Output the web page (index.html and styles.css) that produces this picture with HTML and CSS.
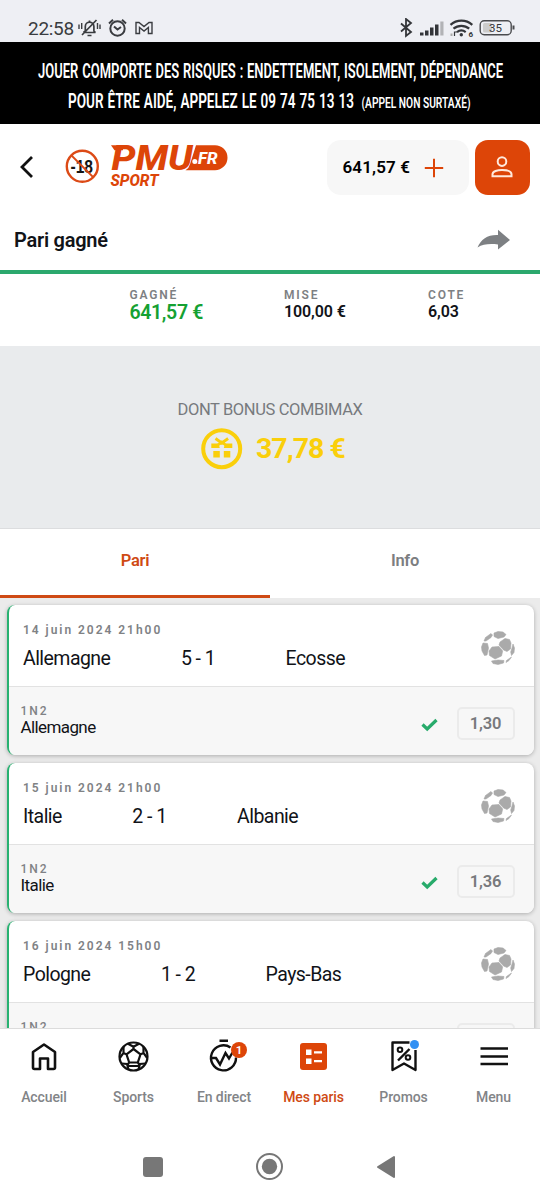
FILE: index.html
```html
<!DOCTYPE html>
<html lang="fr">
<head>
<meta charset="utf-8">
<title>Mes paris</title>
<link rel="stylesheet" href="styles.css">
</head>
<body>
<svg class="defs" width="0" height="0" aria-hidden="true">
  <symbol id="ball" viewBox="0 0 34 34">
    <g fill="#aaa" stroke="#aaa" stroke-width=".6" stroke-linejoin="round">
      <path d="M13 2 17 .5 22 1 25 3.500 23 6 17 7.500 13 5.500Z"/>
      <path d="M10 2.500 11.500 4 10 6.500 5 10 3 10 4.500 6.500Z"/>
      <path d="M24 7.500 28.500 8.500 30 12 29.500 18 26 20.500 22.500 19 18 14 19 11Z"/>
      <path d="M2 12 6.500 12.500 7.500 17 6 24 3.500 24.500 1 20 .5 16Z"/>
      <path d="M11 16 18 15.500 21.700 20 20.500 25 14 28 8.500 24.500 8 20Z"/>
      <path d="M32 13 33.500 17 33 21.500 30.500 24.500 29.700 21 31 17Z"/>
      <path d="M10.500 30 17 29 23 29.500 22.500 32 17 33.500 12 32.500Z"/>
      <path d="M30.500 26 28 29.500 25 31.500 25.500 29.500Z"/>
    </g>
  </symbol>
  <symbol id="check" viewBox="0 0 17 14"><path d="M1.500 6.500 6.200 11 15.500 2" fill="none" stroke="#28ab6b" stroke-width="3.200"/></symbol>
</svg>
<div class="screen">
  <div class="status">
    <span class="clock">22:58</span>
    <svg class="notif" width="76" height="20" viewBox="0 0 76 20" fill="none" stroke="#3a3c40" stroke-width="1.700">
      <path d="M5.500 14.500H17.500M7.300 13V8.500a4.300 4.300 0 0 1 8.600 0V13l1.600 1.500M7.300 13l-1.800 1.500M11.500 2.500v2M4 17 18.500 2M9.500 17.500h4" />
      <path d="M1 6.500v4.500M3.700 5v6M19.500 5v6M22 6.500v4.500" stroke-width="1.400"/>
      <circle cx="39.500" cy="10.500" r="7.200" stroke-width="2"/><path d="M36 8.500 39.500 11.500 43 9M31 5.500 35 1.800M48 5.500 44 1.800" stroke-width="2"/>
      <path d="M58 15.500V4.500h3l5 4 5-4h3v11h-3.600V9.500L66 13l-4.500-3.500v6Z" stroke-width="1.400"/>
    </svg>
    <svg class="signals" width="116" height="20" viewBox="0 0 116 20">
      <path d="M1 5.500 11 14 6 18V1l5 4L1 13.500" fill="none" stroke="#333539" stroke-width="1.800"/>
      <path d="M20 14.500h3.500v3H20ZM25 12.500h3.500v5H25ZM30 9.500h3.500v8H30ZM35 6.500h3.500v11H35Z" fill="#333539"/><path d="M40.300 3.500h3.200v14h-3.200Z" fill="#b2b3b6"/>
      <g fill="none" stroke="#333539" stroke-width="2.200"><path d="M50.500 6.800a16.500 16.500 0 0 1 21.800 0M53.500 10.700a12 12 0 0 1 15.700 0M57 14.200a7 7 0 0 1 8.700 0"/></g>
      <circle cx="61.300" cy="16.800" r="1.700" fill="#333539"/><path d="M51.500 15.500v2.500" stroke="#aaa" stroke-width="2"/><path d="M54.500 13.500V18M55 14h2" stroke="#333539" stroke-width="1.200"/>
      <text x="68.500" y="18.500" class="wifi-gen">6</text>
      <rect x="80.200" y="2.700" width="31" height="14" rx="4" fill="none" stroke="#4a4b4e" stroke-width="1.400"/>
      <rect x="83" y="5" width="9" height="9.500" rx="1.500" fill="#ccc"/><path d="M113.500 7.500v4" stroke="#4a4b4e" stroke-width="2"/>
      <text x="89" y="14" class="battery">35</text>
    </svg>
  </div>
  <div class="warning">
    <svg width="540" height="82" viewBox="0 0 540 82">
      <text x="38" y="35.700" class="w-main" textLength="465" lengthAdjust="spacingAndGlyphs">JOUER COMPORTE DES RISQUES : ENDETTEMENT, ISOLEMENT, DÉPENDANCE</text>
      <text x="68" y="66.200" class="w-main" textLength="286" lengthAdjust="spacingAndGlyphs">POUR ÊTRE AIDÉ, APPELEZ LE 09 74 75 13 13</text>
      <text x="361.500" y="66.200" class="w-small" textLength="109" lengthAdjust="spacingAndGlyphs">(APPEL NON SURTAXÉ)</text>
    </svg>
  </div>
  <header class="header">
    <svg class="back" width="16" height="24" viewBox="0 0 16 24"><path d="M13 2 3 12l10 10" fill="none" stroke="#111" stroke-width="2.800"/></svg>
    <svg class="logo" width="166" height="46" viewBox="0 0 166 46">
      <text x="5.500" y="28.800" class="age" textLength="22.500" lengthAdjust="spacingAndGlyphs">-18</text>
      <circle cx="17.300" cy="22.300" r="15.500" fill="none" stroke="#dc4a16" stroke-width="2.400"/>
      <path d="M6.500 11.500 28 33" stroke="#dc4a16" stroke-width="1.800"/>
      <path d="M131 1.200h19a12.500 12.500 0 0 1 0 25h-29.500q3.500-2 4.500-6Z" fill="#dd4508"/>
      <text x="46.500" y="26" class="pmu" textLength="81" lengthAdjust="spacingAndGlyphs">PMU</text>
      <path d="M46 1.300h12v4.900h-8.500Z" fill="#dd4508"/>
      <circle cx="129.800" cy="17.600" r="2.500" fill="#fff"/>
      <text x="133" y="19.500" class="fr" textLength="19.500" lengthAdjust="spacingAndGlyphs">FR</text>
      <text x="45.500" y="42" class="sport" textLength="48" lengthAdjust="spacingAndGlyphs">SPORT</text>
    </svg>
    <div class="balance"><span>641,57 €</span>
      <svg width="20" height="20" viewBox="0 0 20 20"><path d="M10 .8v18.400M.8 10h18.400" stroke="#dd4508" stroke-width="2"/></svg>
    </div>
    <div class="account">
      <svg width="22" height="22" viewBox="0 0 22 22" fill="none" stroke="#ffe9dc" stroke-width="2"><circle cx="11" cy="5.600" r="4.300"/><path d="M1.500 20.300v-2c0-3 5-4.300 9.500-4.300s9.500 1.300 9.500 4.300v2Z"/></svg>
    </div>
  </header>
  <div class="title"><h1>Pari gagné</h1>
    <svg width="34" height="22" viewBox="0 0 34 22"><path d="M.5 18.500C4 10 11 5.500 21 6V.8L33 11 21 20.500v-5C13 14.500 6 15 .5 18.500Z" fill="#7d8083"/></svg>
  </div>
  <section class="summary">
    <div class="won"><b>GAGNÉ</b><strong>641,57 €</strong></div>
    <div class="stake"><b>MISE</b><strong>100,00 €</strong></div>
    <div class="odds-total"><b>COTE</b><strong>6,03</strong></div>
  </section>
  <section class="bonus">
    <div class="bonus-label">DONT BONUS COMBIMAX</div>
    <div class="bonus-value">
      <svg width="42" height="42" viewBox="0 0 42 42"><circle cx="20.700" cy="20.700" r="18.500" fill="none" stroke="#facf0b" stroke-width="4"/>
        <path d="M10.300 15.500h7.200L18.800 20h-8.500ZM31.300 15.500h-7.200L22.800 20h8.500ZM12.300 23h6.500v6.500h-6.500ZM22.800 23h6.500v6.500h-6.500ZM18 13.500h5.500v3H18Z" fill="#facf0b"/><path d="M14.500 10.500 20.800 15l6.300-4.500M17 17l3.800-3 3.800 3" fill="none" stroke="#facf0b" stroke-width="2.800"/></svg>
      <span>37,78 €</span>
    </div>
  </section>
  <nav class="tabs"><div class="tab active">Pari</div><div class="tab">Info</div></nav>
  <main class="bets">
    <article class="card">
      <div class="match"><div><div class="date">14 juin 2024 21h00</div><div class="teams"><span>Allemagne</span><span>5 - 1</span><span>Ecosse</span></div></div><svg class="ball"><use href="#ball"/></svg></div>
      <div class="pick"><div class="choice"><div class="market">1N2</div><div>Allemagne</div></div><svg class="check"><use href="#check"/></svg><div class="odd">1,30</div></div>
    </article>
    <article class="card">
      <div class="match"><div><div class="date">15 juin 2024 21h00</div><div class="teams"><span>Italie</span><span>2 - 1</span><span>Albanie</span></div></div><svg class="ball"><use href="#ball"/></svg></div>
      <div class="pick"><div class="choice"><div class="market">1N2</div><div>Italie</div></div><svg class="check"><use href="#check"/></svg><div class="odd">1,36</div></div>
    </article>
    <article class="card">
      <div class="match"><div><div class="date">16 juin 2024 15h00</div><div class="teams"><span>Pologne</span><span>1 - 2</span><span>Pays-Bas</span></div></div><svg class="ball"><use href="#ball"/></svg></div>
      <div class="pick"><div class="choice"><div class="market">1N2</div></div><div class="odd"></div></div>
    </article>
  </main>
  <nav class="bottom">
    <div class="item"><svg width="36" height="36" viewBox="0 0 36 36" fill="none" stroke="#111" stroke-width="2.600"><path d="M7 14 18 6.500 29 14v15.500q0 1.500-1.500 1.500H22V20.500h-8V31H8.500Q7 31 7 29.500Z" stroke-linejoin="round"/></svg><span>Accueil</span></div>
    <div class="item"><svg width="36" height="36" viewBox="0 0 36 36" fill="none" stroke="#111" stroke-width="2.200"><circle cx="17.500" cy="18.500" r="14"/><path d="m17.500 11 7 5.300-2.700 8.200h-8.600l-2.700-8.200ZM17.500 11V8.500M24.500 16.300l3.500-1.300M21.800 24.500l1.500 2M13.200 24.500l-1.500 2M10.500 16.300 7 15M12 5.800l5.500 3 5.500-3M27.500 9v6l3.700 5M29.500 25.500l-5.500.5-1.500 5.500M12.500 31.500 11 26l-5.500-.5M3.800 20 7.500 15V9M12 28h11"/></svg><span>Sports</span></div>
    <div class="item"><svg width="36" height="36" viewBox="0 0 36 36" fill="none" stroke="#111" stroke-width="2.400"><path d="M24.500 9.500A12.500 12.500 0 1 0 30 19.500M13.500 2.700h8.500" /><path d="M5 20h5l4 6.500L19.500 15l3.500 5.500 3.500-6"/></svg><i class="badge">1</i><span>En direct</span></div>
    <div class="item current"><svg width="36" height="36" viewBox="0 0 36 36"><rect x="4" y="5" width="27" height="27" rx="3" fill="#dd4508"/><path d="M10 11.500h5.500V17H10ZM10 20.500h5.500V26H10ZM18 13.200h8v2.300h-8ZM18 22h8v2.300h-8Z" fill="#fff"/></svg><span>Mes paris</span></div>
    <div class="item"><svg width="36" height="36" viewBox="0 0 36 36" fill="none" stroke="#111" stroke-width="2.400" stroke-linejoin="round"><path d="M23.500 4.500H6.500V32L18 25.500 29.500 32V12M23.500 11 12 22.500"/><circle cx="14" cy="11.800" r="2.300" stroke-width="2"/><circle cx="22" cy="19.500" r="2.300" stroke-width="2"/></svg><i class="dot"></i><span>Promos</span></div>
    <div class="item"><svg width="36" height="36" viewBox="0 0 36 36"><path d="M4.500 10.500h27.500M4.500 18.500h27.500M4.500 26h27.500" stroke="#111" stroke-width="2.400"/></svg><span>Menu</span></div>
  </nav>
  <div class="system">
    <svg width="20" height="20"><rect width="20" height="20" rx="3" fill="#777"/></svg>
    <svg width="28" height="28"><circle cx="13.500" cy="13.500" r="12.500" fill="none" stroke="#777" stroke-width="2"/><circle cx="13.500" cy="13.500" r="7.700" fill="#777"/></svg>
    <svg width="20" height="24"><path d="M2 12 18 2v20Z" fill="#777" stroke="#777" stroke-width="2" stroke-linejoin="round"/></svg>
  </div>
</div>
</body>
</html>
```
FILE: styles.css
```css
* { box-sizing: border-box; }
body { margin: 0; font-family: Roboto, sans-serif; color: #111318; background: #fff; }
svg { display: block; flex: none; }
.defs { position: absolute; }
.screen { width: 540px; height: 1200px; overflow: hidden; display: flex; flex-direction: column; }
.screen > * { flex: none; }

.status { height: 42px; background: #eeeff4; display: flex; padding: 17px 24px 0 28px; }
.clock { font-size: 19px; line-height: 23px; width: 50px; letter-spacing: -.3px; color: #3a3c40; }
.notif { margin-top: 1px; }
.signals { margin: 1px 0 0 auto; transform: translateX(-6px); margin-right: -6px; }
.wifi-gen { font-size: 8px; font-weight: 700; fill: #333539; }
.battery { font-size: 11.5px; fill: #333539; }

.warning { height: 82px; background: #000; }
.w-main { font-size: 21px; font-weight: 600; fill: #fff; word-spacing: 1px; }
.w-small { font-size: 15px; font-weight: 600; fill: #fff; }

.header { height: 86px; display: flex; align-items: center; padding: 0 10.5px 0 19px; }
.logo { margin-left: 30px; }
.age { font-family: "Liberation Sans", sans-serif; font-size: 18px; font-weight: 700; fill: #151515; }
.pmu { font-size: 34.5px; font-weight: 800; font-style: italic; fill: #dd4508; }
.fr { font-size: 17px; font-weight: 800; font-style: italic; fill: #fff; }
.sport { font-size: 16px; font-weight: 800; font-style: italic; fill: #dd4508; }
.balance { margin-left: auto; width: 142px; height: 55px; border-radius: 14px; background: #f7f7f7; display: flex; align-items: center; padding-left: 16px; gap: 13.5px; font-size: 17px; font-weight: 600; letter-spacing: .15px; white-space: nowrap; color: #000; }
.balance svg { margin-top: 1px; }
.account { margin-left: 6px; width: 55px; height: 55px; border-radius: 13px; background: #dd4508; display: flex; align-items: center; justify-content: center; }

.title { height: 60px; display: flex; align-items: center; justify-content: space-between; padding: 0 29px 0 14px; }
.title h1 { margin: 0; font-size: 20px; font-weight: 600; letter-spacing: -.25px; }

.summary { height: 76px; border-top: 4px solid #2ba86d; display: grid; grid-template-columns: 154.5px 144px 1fr; padding: 14px 0 0 129.5px; }
.summary b { display: block; font-size: 12px; line-height: 14px; font-weight: 600; letter-spacing: 1.8px; color: #7d8083; }
.summary strong { display: block; font-size: 16px; line-height: 19px; font-weight: 600; letter-spacing: -.1px; }
.summary .won strong { font-size: 19.5px; line-height: 21px; letter-spacing: -.35px; color: #15a132; }

.bonus { height: 183px; background: #e9ebed; border-bottom: 1px solid #dcdddf; padding-top: 54px; }
.bonus-label { text-align: center; font-size: 16.5px; line-height: 20px; color: #777a7e; letter-spacing: -.38px; }
.bonus-value { display: flex; align-items: center; padding-left: 201px; gap: 13px; margin-top: 7.5px; color: #facf0b; font-size: 28.5px; line-height: 42px; font-weight: 700; letter-spacing: -1px; }

.tabs { height: 69px; display: flex; }
.tab { flex: 1; text-align: center; font-size: 16.5px; line-height: 64px; font-weight: 600; letter-spacing: -.25px; color: #7c7e81; }
.tab.active { color: #cf4a14; border-bottom: 3px solid #cf4a14; }

.bets { height: 430px; overflow: hidden; background: #ebebeb; padding: 6.5px 6.5px 0 7px; display: flex; flex-direction: column; gap: 8px; }
.card { flex: none; height: 150px; background: #fff; border-left: 2.5px solid #28b271; border-radius: 8px; box-shadow: 0 1px 4px #0004; overflow: hidden; }
.match { height: 81px; display: flex; justify-content: space-between; padding: 17px 18.5px 0 14px; }
.date { font-size: 12px; line-height: 17px; font-weight: 600; letter-spacing: 1.97px; color: #808285; }
.teams { display: flex; gap: 70.5px; font-size: 19.5px; line-height: 26px; margin-top: 7px; letter-spacing: -.55px; white-space: nowrap; }
.ball { width: 34px; height: 34px; margin-top: 9.5px; }
.pick { height: 69px; background: #f7f7f7; border-top: 1px solid #e2e2e2; display: flex; align-items: flex-start; padding: 20px 19px 0 11.5px; }
.choice { flex: 1; margin-top: -3px; font-size: 17px; line-height: 19px; letter-spacing: -.6px; }
.market { font-size: 12px; line-height: 14px; font-weight: 500; letter-spacing: 2px; color: #808285; }
.check { width: 17px; height: 14px; margin: 11px 19px 0 0; }
.odd { width: 58px; height: 33px; border: 2px solid #ebebeb; border-radius: 5px; text-align: center; font-size: 16.5px; line-height: 29px; font-weight: 600; letter-spacing: -.2px; color: #77797c; }

.bottom { height: 102px; border-top: 1px solid #dcdcdc; display: grid; grid-template-columns: 88px 91px 90px 89px 91px 89px; background: #fff; }
.item { position: relative; display: flex; flex-direction: column; align-items: center; padding-top: 9px; font-size: 14px; line-height: 20px; font-weight: 500; letter-spacing: -.1px; color: #828487; }
.item span { margin-top: 13px; }
.current { color: #cf4a14; }
.badge { position: absolute; left: 52px; top: 13px; width: 16px; height: 16px; border-radius: 50%; background: #dd4508; color: #fff; font: 600 11.5px/16px Roboto, sans-serif; text-align: center; }
.dot { position: absolute; left: 52px; top: 10.5px; width: 9px; height: 9px; border-radius: 50%; background: #3190f3; }

.system { flex: 1; display: flex; align-items: center; padding: 4px 144px 0 143px; justify-content: space-between; }
```
